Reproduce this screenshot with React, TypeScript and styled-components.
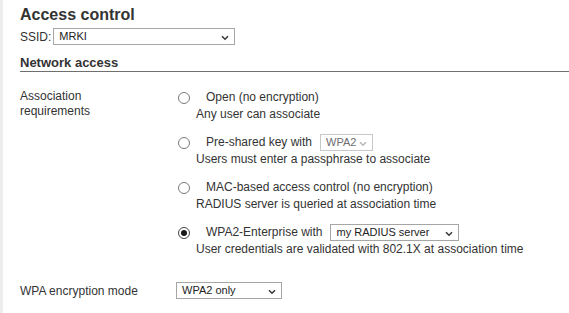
import React from "react";
import styled, { createGlobalStyle } from "styled-components";

const Global = createGlobalStyle`
  html, body { margin: 0; padding: 0; background: #fff; }
  body { font-family: "Liberation Sans", Arial, sans-serif; color: #333; }
`;

const Page = styled.div`
  width: 569px;
  height: 313px;
  box-sizing: border-box;
  border-left: 3px solid #ededed;
  padding: 5px 0 0 17px;
  overflow: hidden;
`;

const Title = styled.h1`
  margin: 0;
  font-size: 16px;
  line-height: 19px;
  font-weight: bold;
  color: #333;
`;

const SsidRow = styled.div`
  display: flex;
  align-items: center;
  gap: 2px;
  margin-top: 4px;
  font-size: 12px;
  height: 17px;
`;

const Section = styled.h2`
  margin: 10px 0 0 0;
  font-size: 13px;
  line-height: 15px;
  font-weight: bold;
  color: #333;
  padding-bottom: 1px;
  border-bottom: 1px solid #6f6f6f;
`;

const Form = styled.div`
  display: grid;
  grid-template-columns: 156px 1fr;
  margin-top: 17px;
  font-size: 12px;
`;

const Label = styled.div<{ $top?: number }>`
  line-height: 15px;
  padding-top: ${(p) => p.$top ?? 0}px;
`;

const Options = styled.div`
  display: flex;
  flex-direction: column;
  gap: 12px;
`;

const Option = styled.div`
  display: flex;
  flex-direction: column;
`;

const OptionLine = styled.div`
  display: flex;
  align-items: center;
  height: 17px;
  line-height: 17px;
`;

const Radio = styled.span<{ $checked?: boolean }>`
  box-sizing: border-box;
  width: 12px;
  height: 12px;
  margin: 0 16px 0 2px;
  border-radius: 50%;
  border: 1px solid ${(p) => (p.$checked ? "#444" : "#7a7a7a")};
  background: #fff;
  display: flex;
  align-items: center;
  justify-content: center;
  flex: none;
  &::after {
    content: "";
    display: ${(p) => (p.$checked ? "block" : "none")};
    width: 6px;
    height: 6px;
    border-radius: 50%;
    background: #1a1a1a;
  }
`;

const Desc = styled.div`
  margin: 1px 0 0 20px;
  line-height: 15px;
`;

const SelectBox = styled.div<{ $w: number; $disabled?: boolean }>`
  box-sizing: border-box;
  width: ${(p) => p.$w}px;
  height: 17px;
  border: 1px solid ${(p) => (p.$disabled ? "#c8c8c8" : "#a6a6a6")};
  background: #fff;
  display: flex;
  align-items: center;
  justify-content: space-between;
  padding: 0 5px 0 5px;
  font-size: 11px;
  line-height: 15px;
  color: ${(p) => (p.$disabled ? "#6d6d6d" : "#222")};
  flex: none;
  svg {
    flex: none;
    margin-top: 3px;
  }
`;

const Chevron = ({ disabled }: { disabled?: boolean }) => (
  <svg width="8" height="6" viewBox="0 0 8 6">
    <path
      d="M1 1.2 L4 4.2 L7 1.2"
      fill="none"
      stroke={disabled ? "#b8b8b8" : "#3a3a3a"}
      strokeWidth="1.6"
    />
  </svg>
);

const Select = ({
  value,
  width,
  disabled,
  className,
}: {
  value: string;
  width: number;
  disabled?: boolean;
  className?: string;
}) => (
  <SelectBox $w={width} $disabled={disabled} className={className}>
    <span>{value}</span>
    <Chevron disabled={disabled} />
  </SelectBox>
);

const InlineSelect = styled(Select)<{ $ml: number }>`
  margin-left: ${(p) => p.$ml}px;
`;

const ModeRow = styled.div`
  display: grid;
  grid-template-columns: 156px 1fr;
  align-items: center;
  margin-top: 25px;
  font-size: 12px;
  height: 17px;
`;

export default function App() {
  return (
    <>
      <Global />
      <Page>
        <Title>Access control</Title>
        <SsidRow>
          <span>SSID:</span>
          <Select value="MRKI" width={182} />
        </SsidRow>
        <Section>Network access</Section>
        <Form>
          <Label>
            Association
            <br />
            requirements
          </Label>
          <Options>
            <Option>
              <OptionLine>
                <Radio />
                <span>Open (no encryption)</span>
              </OptionLine>
              <Desc>Any user can associate</Desc>
            </Option>
            <Option>
              <OptionLine>
                <Radio />
                <span>Pre-shared key with</span>
                <InlineSelect $ml={8} value="WPA2" width={53} disabled />
              </OptionLine>
              <Desc>Users must enter a passphrase to associate</Desc>
            </Option>
            <Option>
              <OptionLine>
                <Radio />
                <span>MAC-based access control (no encryption)</span>
              </OptionLine>
              <Desc>RADIUS server is queried at association time</Desc>
            </Option>
            <Option>
              <OptionLine>
                <Radio $checked />
                <span>WPA2-Enterprise with</span>
                <InlineSelect $ml={8} value="my RADIUS server" width={129} />
              </OptionLine>
              <Desc>User credentials are validated with 802.1X at association time</Desc>
            </Option>
          </Options>
        </Form>
        <ModeRow>
          <span>WPA encryption mode</span>
          <Select value="WPA2 only" width={106} />
        </ModeRow>
      </Page>
    </>
  );
}
